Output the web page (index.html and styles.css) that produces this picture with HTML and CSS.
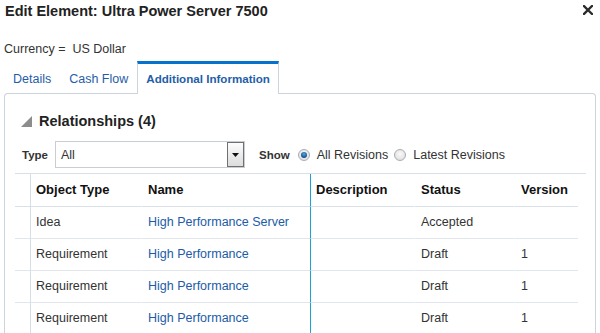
FILE: index.html
```html
<!DOCTYPE html>
<html>
<head>
<meta charset="utf-8">
<link rel="stylesheet" href="styles.css">
</head>
<body>
<div class="titlebar">
  <h1 class="title">Edit Element: Ultra Power Server 7500</h1>
  <svg class="close" width="10" height="10" viewBox="0 0 10 10"><path d="M1 1L9 9M9 1L1 9" stroke="#2b2b2b" stroke-width="2.3" stroke-linecap="square"/></svg>
</div>
<div class="currency">Currency =&nbsp; US Dollar</div>
<div class="tabs">
  <div class="tab">Details</div>
  <div class="tab">Cash Flow</div>
  <div class="tab active">Additional Information</div>
</div>
<div class="panel">
  <div class="section-head">
    <svg class="disclosure" width="11" height="11" viewBox="0 0 11 11"><polygon points="11,0 11,11 0,11" fill="#8c8c8c"/></svg>
    <span class="section-title">Relationships (4)</span>
  </div>
  <div class="filters">
    <span class="label">Type</span>
    <div class="select"><span class="select-value">All</span><span class="select-btn"><svg width="7" height="4" viewBox="0 0 7 4"><polygon points="0,0 7,0 3.5,4" fill="#111"/></svg></span></div>
    <span class="label show">Show</span>
    <span class="radio checked"></span><span class="radio-text">All Revisions</span>
    <span class="radio"></span><span class="radio-text">Latest Revisions</span>
  </div>
  <div class="grid">
    <table>
      <colgroup><col class="c0"><col class="c1"><col class="c2"><col class="c3"><col class="c4"><col class="c5"></colgroup>
      <thead>
        <tr><th class="sel"></th><th>Object Type</th><th class="gap">Name</th><th class="blue">Description</th><th class="gap">Status</th><th class="gap">Version</th></tr>
      </thead>
      <tbody>
        <tr><td class="sel"></td><td>Idea</td><td class="gap link">High Performance Server</td><td class="blue"></td><td class="gap">Accepted</td><td class="gap"></td></tr>
        <tr><td class="sel"></td><td>Requirement</td><td class="gap link">High Performance</td><td class="blue"></td><td class="gap">Draft</td><td class="gap">1</td></tr>
        <tr><td class="sel"></td><td>Requirement</td><td class="gap link">High Performance</td><td class="blue"></td><td class="gap">Draft</td><td class="gap">1</td></tr>
        <tr><td class="sel"></td><td>Requirement</td><td class="gap link">High Performance</td><td class="blue"></td><td class="gap">Draft</td><td class="gap">1</td></tr>
      </tbody>
    </table>
  </div>
</div>
</body>
</html>
```
FILE: styles.css
```css
html, body { margin: 0; padding: 0; background: #fff; overflow: hidden; }
body { font-family: "Liberation Sans", Arial, sans-serif; font-size: 12.5px; color: #333; width: 600px; height: 333px; }

.titlebar { display: flex; justify-content: space-between; align-items: flex-start; padding: 1px 7px 0 5px; height: 20px; }
.title { margin: 0; font-size: 14.5px; line-height: 20px; font-weight: bold; color: #222; }
.close { margin-top: 4px; }

.currency { margin-top: 20px; padding-left: 4px; line-height: 16px; color: #333; }

.tabs { display: flex; align-items: flex-end; margin-top: 4px; padding-left: 4px; position: relative; z-index: 1; }
.tab { border: 1px solid transparent; border-top: 3px solid transparent; border-bottom: 0; padding: 7px 8px 6px; line-height: 16px; color: #1f5ea8; }
.tab.active { border-color: #cbd3dc; border-top-color: #0572ce; background: #fff; font-weight: bold; font-size: 11.6px; padding: 7px 8px 7px; margin-bottom: -1px; }

.panel { margin-left: 4px; width: 590px; height: 239px; overflow: hidden; border: 1px solid #cbd3dc; border-bottom: 0; border-radius: 4px 4px 0 0; }

.section-head { display: flex; align-items: center; padding: 18px 0 0 16px; height: 18px; }
.disclosure { margin-right: 7px; margin-top: 1px; }
.section-title { font-size: 14.5px; font-weight: bold; line-height: 18px; color: #222; }

.filters { display: flex; align-items: center; margin-top: 11px; padding-left: 17px; height: 27px; }
.label { font-weight: bold; font-size: 11.5px; color: #333; }
.select { display: flex; align-items: center; justify-content: space-between; box-sizing: border-box; width: 190px; height: 27px; margin-left: 7px; border: 1px solid #c9ced4; padding: 0 0 0 5px; background: #fff; }
.select-value { color: #333; }
.select-btn { display: flex; align-items: center; justify-content: center; box-sizing: border-box; width: 17px; height: 25px; border: 1px solid #707070; background: linear-gradient(#fdfdfd, #dcdcdc); }
.show { margin-left: 14px; margin-right: 8px; }
.radio { box-sizing: border-box; width: 12px; height: 12px; border-radius: 50%; border: 1px solid #a8adb3; background: radial-gradient(circle at 50% 40%, #fafafa, #d9d9d9); position: relative; }
.radio.checked::after { content: ""; position: absolute; left: 2px; top: 2px; width: 6px; height: 6px; border-radius: 50%; background: radial-gradient(circle at 50% 35%, #5ba3df, #14508c 70%); }
.radio-text { margin: 0 6px 0 7px; color: #333; }

.grid { margin: 5px 0 0 10px; width: 571px; border-top: 1px solid #d9e0e7; }
table { border-collapse: separate; border-spacing: 0; table-layout: fixed; width: 563px; }
col.c0 { width: 16px; } col.c1 { width: 110px; } col.c2 { width: 169px; } col.c3 { width: 104px; } col.c4 { width: 100px; } col.c5 { width: 64px; }
th, td { padding: 0 0 0 5px; text-align: left; white-space: nowrap; overflow: hidden; border-bottom: 1px solid #e1e6ec; }
th { font-size: 13px; font-weight: bold; color: #111; line-height: 32px; border-bottom-color: #d9e0e7; }
td { line-height: 31px; color: #333; }
.sel { padding: 0; border-right: 1px solid #d6dde4; }
.gap { border-left: 1px solid #fff; padding-left: 6px; }
.blue { border-left: 1px solid #17a3d8; }
.link { color: #1c5ba8; }
```
